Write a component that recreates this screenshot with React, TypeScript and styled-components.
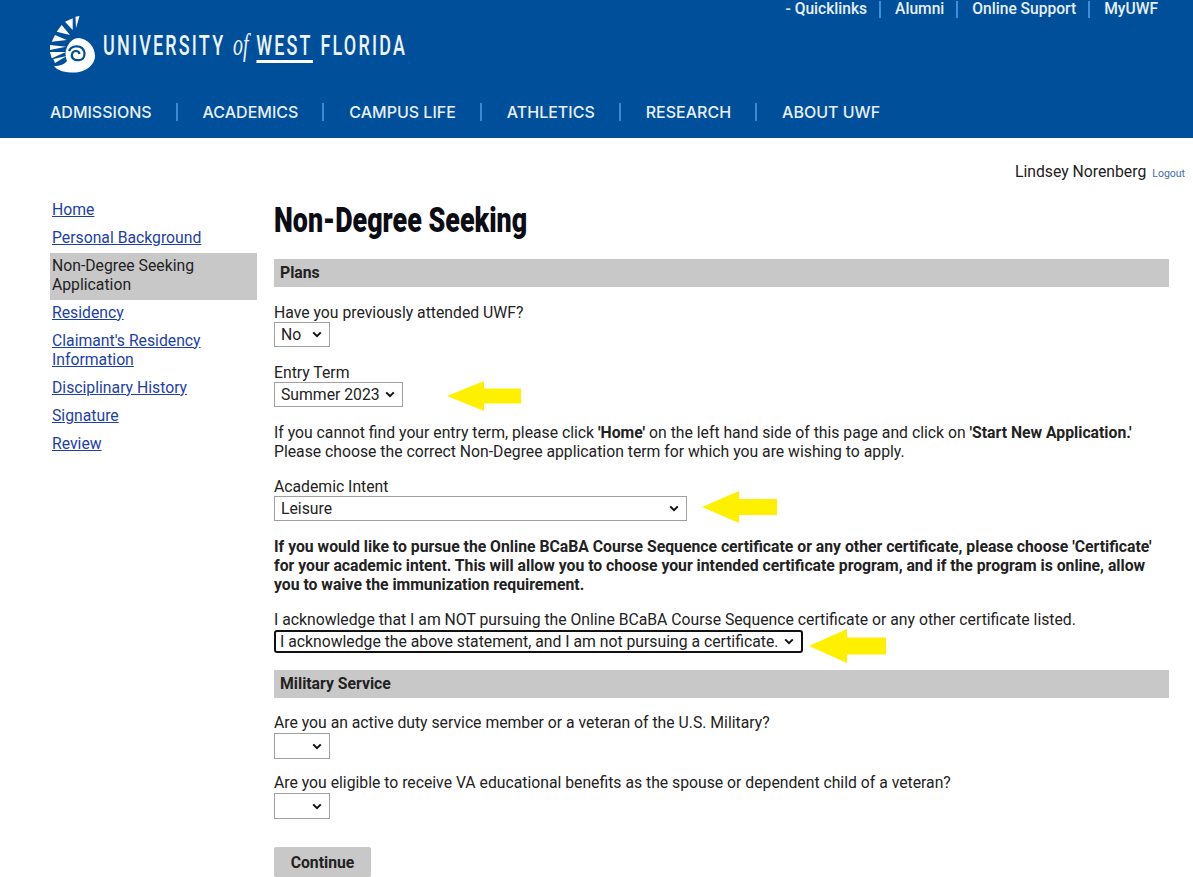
import React from "react";
import styled, { createGlobalStyle } from "styled-components";

const chevron = `url("data:image/svg+xml,%3Csvg xmlns='http://www.w3.org/2000/svg' width='10' height='7' viewBox='0 0 10 7'%3E%3Cpath d='M1.2 1.4 5 5.2 8.8 1.4' fill='none' stroke='%23111' stroke-width='2'/%3E%3C/svg%3E")`;

const Global = createGlobalStyle`
  html, body { margin: 0; padding: 0; background: #fff; }
  body { font-family: Roboto, "Liberation Sans", sans-serif; font-size: 15.75px; line-height: 19px; color: #222; }
`;
const Page = styled.div`width: 1193px; height: 877px; overflow: hidden;`;
const Header = styled.header`height: 138px; background: #004f9b; color: #fff; display: flex; flex-direction: column; padding: 0 35px 0 50px; box-sizing: border-box;`;
const TopBar = styled.div`height: 18px; display: flex; justify-content: flex-end; align-items: center; font-size: 15.6px; font-weight: 500; color: #e6f0fa;`;
const TopLink = styled.span`
  padding: 0 12px 0 14px; line-height: 17px;
  &:last-child { padding-right: 0; }
  &:not(:last-child) { border-right: 2px solid #3f8fd8; }
`;
const LogoRow = styled.div`height: 58px; margin-top: -3px; display: flex; align-items: center; gap: 7px;`;
const Wordmark = styled.div`font-family: Roboto, sans-serif; font-weight: 500; font-size: 28px; letter-spacing: 3.4px; color: #eef4fb; display: flex; gap: 12px; align-items: baseline; white-space: nowrap; transform: scaleX(0.642); transform-origin: left center; margin-top: 7px;`;
const Of = styled.span`font-family: "Liberation Serif", serif; font-style: italic; font-weight: 400; letter-spacing: 0; font-size: 31px;`;
const West = styled.span`border-bottom: 3px solid #fff; padding-bottom: 1px; line-height: 27px;`;
const Nav = styled.nav`display: flex; align-items: center; margin-top: 30px;`;
const NavItem = styled.span`font-family: Inter, Roboto, sans-serif; font-size: 16px; font-weight: 500; line-height: 18px; color: #e8f1fa; padding-right: 24px; margin-right: 25px; border-right: 2px solid #3a8ad6; white-space: nowrap; &:last-child { border: 0; }`;
const UserRow = styled.div`height: 48px; padding: 24px 8px 0 0; box-sizing: border-box; display: flex; justify-content: flex-end; align-items: baseline; gap: 6px;`;
const Logout = styled.a`font-size: 10.5px; color: #3f6ea8;`;
const Content = styled.div`display: flex; padding-left: 50px; margin-top: 9px;`;
const Side = styled.aside`width: 207px; margin-right: 17px; display: flex; flex-direction: column;`;
const SideLink = styled.a<{ $active?: boolean }>`
  display: block; padding: 4.5px 2px; color: #1d3fa8; text-decoration: underline;
  ${(p) => p.$active && "color: #222; text-decoration: none; background: #c8c8c8; padding: 3px 2px 6.5px; margin: 1.5px 0 -2px;"}
`;
const Main = styled.main`width: 895px; padding-top: 7px;`;
const Title = styled.h1`font-family: Roboto, sans-serif; font-size: 35px; line-height: 38px; font-weight: 900; color: #0c0c14; margin: 0 0 19px; white-space: nowrap; transform: scaleX(0.767); transform-origin: left center;`;
const Bar = styled.div`height: 28px; background: #c8c8c8; font-weight: 700; line-height: 28px; padding-left: 6px; color: #222;`;
const Field = styled.div<{ $mt: number }>`margin-top: ${(p) => p.$mt}px;`;
const Label = styled.div`line-height: 19px;`;
const SelectRow = styled.div<{ $h: number }>`display: flex; align-items: center; height: ${(p) => p.$h}px;`;
const Select = styled.select<{ $w: number; $focus?: boolean; $h?: number; $mt?: number }>`
  appearance: none; width: ${(p) => p.$w}px; height: ${(p) => p.$h ?? 25}px; margin: ${(p) => p.$mt ?? 0}px 0 0;
  font: 15.75px Roboto, sans-serif; color: #222; display: block; box-sizing: border-box;
  background: #fff ${chevron} no-repeat right 7px center;
  border: 1px solid #a0a0a0; padding: 0 0 0 6px; border-radius: 0;
  ${(p) => p.$focus && "border: 2px solid #111; border-radius: 3px; padding-left: 4px;"}
`;
const Para = styled.p<{ $mt: number; $bold?: boolean }>`margin: ${(p) => p.$mt}px 0 0; font-weight: ${(p) => (p.$bold ? 700 : 400)};`;
const Arrow = styled.svg<{ $gap: number; $dy: number }>`margin: ${(p) => p.$dy * 2}px 0 0 ${(p) => p.$gap}px; flex: none;`;
const Button = styled.button`display: block; margin-top: 28px; width: 97px; height: 30px; background: #c8c8c8; border: 0; border-radius: 2px; font: 700 15.75px Roboto, sans-serif; color: #222; padding: 0;`;

type ArrowProps = { gap: number; dy: number; w: number; h: number; bh: number; head: number };
const YellowArrow = ({ gap, dy, w, h, bh, head }: ArrowProps) => {
  const top = (h - bh) / 2;
  return (
    <Arrow $gap={gap} $dy={dy} width={w} height={h} viewBox={`0 0 ${w} ${h}`}>
      <polygon points={`0,${h / 2} ${head},0 ${head},${top} ${w},${top} ${w},${top + bh} ${head},${top + bh} ${head},${h}`} fill="#fff000" />
    </Arrow>
  );
};

const Logo = () => (
  <svg width="46" height="58" viewBox="0 0 46 58" style={{ flex: "none" }}>
    <g fill="#fff">
      <polygon points="29.5,1 25.5,1.7 26,13" />
      <polygon points="22.7,3.3 15,6.7 22.7,15" />
      <polygon points="11.7,10 6.7,16.7 20,20" />
      <polygon points="5,20 1.7,26.7 16.7,25" />
      <polygon points="0,30 0,35 16,31.7" />
      <polygon points="0,37 1.7,43.3 16,37" />
      <polygon points="3.3,44 5,48 16.7,41" />
      <path d="M4 51 C 10 51 15 49 17 46 C 15 41 15 37 17 32 C 20 26 24 23 29 23 C 38 24 45 32 45 41 C 45 50 35 57.5 24 57.5 C 15 57.5 8 56 4 51 Z" />
    </g>
    <path d="M19 36 C 21 31 28 30 32 33 C 36 37 35 44 30 45 C 24 46 21 43 22 39 C 23 35 29 35 29.5 39" fill="none" stroke="#004f9b" strokeWidth="2.2" />
  </svg>
);

export default function App() {
  return (
    <Page>
      <Global />
      <Header>
        <TopBar>
          <TopLink>- Quicklinks</TopLink>
          <TopLink>Alumni</TopLink>
          <TopLink>Online Support</TopLink>
          <TopLink>MyUWF</TopLink>
        </TopBar>
        <LogoRow>
          <Logo />
          <Wordmark>
            <span>UNIVERSITY</span>
            <Of>of</Of>
            <West>WEST</West>
            <span>FLORIDA</span>
          </Wordmark>
        </LogoRow>
        <Nav>
          <NavItem>ADMISSIONS</NavItem>
          <NavItem>ACADEMICS</NavItem>
          <NavItem>CAMPUS LIFE</NavItem>
          <NavItem>ATHLETICS</NavItem>
          <NavItem>RESEARCH</NavItem>
          <NavItem>ABOUT UWF</NavItem>
        </Nav>
      </Header>
      <UserRow>
        <span>Lindsey Norenberg</span>
        <Logout>Logout</Logout>
      </UserRow>
      <Content>
        <Side>
          <SideLink>Home</SideLink>
          <SideLink>Personal Background</SideLink>
          <SideLink $active>Non-Degree Seeking Application</SideLink>
          <SideLink>Residency</SideLink>
          <SideLink>Claimant's Residency Information</SideLink>
          <SideLink>Disciplinary History</SideLink>
          <SideLink>Signature</SideLink>
          <SideLink>Review</SideLink>
        </Side>
        <Main>
          <Title>Non-Degree Seeking</Title>
          <Bar>Plans</Bar>
          <Field $mt={16}>
            <Label>Have you previously attended UWF?</Label>
            <Select $w={56}><option>No</option></Select>
          </Field>
          <Field $mt={16}>
            <Label>Entry Term</Label>
            <SelectRow $h={25}>
              <Select $w={129}><option>Summer 2023</option></Select>
              <YellowArrow gap={44} dy={1} w={74} h={30} bh={15} head={37} />
            </SelectRow>
          </Field>
          <Para $mt={16}>
            If you cannot find your entry term, please click <b>'Home'</b> on the left hand side of this page and click on <b>'Start New Application.'</b><br />
            Please choose the correct Non-Degree application term for which you are wishing to apply.
          </Para>
          <Field $mt={16}>
            <Label>Academic Intent</Label>
            <SelectRow $h={25}>
              <Select $w={413}><option>Leisure</option></Select>
              <YellowArrow gap={15} dy={-1.5} w={75} h={32} bh={16} head={37} />
            </SelectRow>
          </Field>
          <Para $mt={16} $bold>
            If you would like to pursue the Online BCaBA Course Sequence certificate or any other certificate, please choose 'Certificate' for your academic intent. This will allow you to choose your intended certificate program, and if the program is online, allow you to waive the immunization requirement.
          </Para>
          <Field $mt={16}>
            <Label>I acknowledge that I am NOT pursuing the Online BCaBA Course Sequence certificate or any other certificate listed.</Label>
            <SelectRow $h={24}>
              <Select $w={529} $h={23} $mt={1} $focus><option>I acknowledge the above statement, and I am not pursuing a certificate.</option></Select>
              <YellowArrow gap={6} dy={4.5} w={77} h={34} bh={17} head={38} />
            </SelectRow>
          </Field>
          <Field $mt={17}><Bar>Military Service</Bar></Field>
          <Field $mt={15}>
            <Label>Are you an active duty service member or a veteran of the U.S. Military?</Label>
            <Select $w={56} $h={26} $mt={1}><option></option></Select>
          </Field>
          <Field $mt={14}>
            <Label>Are you eligible to receive VA educational benefits as the spouse or dependent child of a veteran?</Label>
            <Select $w={56} $h={26} $mt={1}><option></option></Select>
          </Field>
          <Button>Continue</Button>
        </Main>
      </Content>
    </Page>
  );
}
